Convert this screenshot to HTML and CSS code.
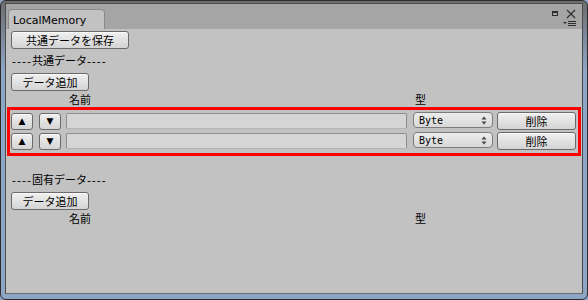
FILE: index.html
```html
<!DOCTYPE html>
<html lang="ja">
<head>
    <meta charset="UTF-8">
    <title>LocalMemory</title>
    <link rel="stylesheet" href="styles.css">
</head>
<body>
    <div class="window">
        <div class="panel">
            <div class="tabbar">
                <div class="tab">LocalMemory</div>
                <svg class="tools" width="28" height="20" viewBox="0 0 28 20">
                    <rect x="2.5" y="4.5" width="5" height="4" fill="none" stroke="#2e2e2e"/>
                    <rect x="2" y="4" width="6" height="2" fill="#2e2e2e"/>
                    <path d="M17 3 L25 11 M25 3 L17 11" stroke="#2e2e2e" stroke-width="1.2"/>
                    <path d="M13 15 L17 15 L15 17 Z" fill="#2e2e2e"/>
                    <path d="M18 14.5 H26 M18 16.5 H26 M18 18.5 H26" stroke="#2e2e2e"/>
                </svg>
            </div>
            <div class="content">
                <button class="btn btn-save">共通データを保存</button>

                <div class="section-title"><span class="dash">----</span>共通データ<span class="dash">----</span></div>
                <button class="btn btn-add">データ追加</button>
                <div class="header-row">
                    <span class="col-name">名前</span>
                    <span class="col-type">型</span>
                </div>
                <div class="highlight">
                    <div class="item-row">
                        <button class="btn btn-arrow">▲</button>
                        <button class="btn btn-arrow down">▼</button>
                        <div class="field"></div>
                        <div class="select">
                            <span>Byte</span>
                            <svg width="6" height="9" viewBox="0 0 6 9"><path d="M0.5 3.5 L3 0.5 L5.5 3.5 Z M0.5 5.5 L3 8.5 L5.5 5.5 Z" fill="#444"/></svg>
                        </div>
                        <button class="btn btn-delete">削除</button>
                    </div>
                    <div class="item-row">
                        <button class="btn btn-arrow">▲</button>
                        <button class="btn btn-arrow down">▼</button>
                        <div class="field"></div>
                        <div class="select">
                            <span>Byte</span>
                            <svg width="6" height="9" viewBox="0 0 6 9"><path d="M0.5 3.5 L3 0.5 L5.5 3.5 Z M0.5 5.5 L3 8.5 L5.5 5.5 Z" fill="#444"/></svg>
                        </div>
                        <button class="btn btn-delete">削除</button>
                    </div>
                </div>

                <div class="section-title second"><span class="dash">----</span>固有データ<span class="dash">----</span></div>
                <button class="btn btn-add">データ追加</button>
                <div class="header-row">
                    <span class="col-name">名前</span>
                    <span class="col-type">型</span>
                </div>
            </div>
        </div>
    </div>
</body>
</html>
```

FILE: styles.css
```css
body {
    margin: 0;
    background-color: #8ea6c5;
    font-family: "DejaVu Sans", "Noto Sans CJK JP", sans-serif;
    font-size: 11px;
    color: #000000;
}

.window {
    width: 588px;
    height: 300px;
    box-sizing: border-box;
    border: 1px solid #2c2c2c;
    border-radius: 6px;
    padding: 2px 4px 5px 4px;
    background: linear-gradient(#6e6e6e 0, #7b8494 30px, #8ea6c5 70px);
    display: flex;
}

.panel {
    flex: 1;
    display: flex;
    flex-direction: column;
    border: 1px solid #4a4a4a;
    border-bottom-color: #6d6d6d;
    background-color: #c2c2c2;
}

.tabbar {
    height: 25px;
    box-sizing: border-box;
    background-color: #a5a5a5;
    padding: 5px 0 0 2px;
    display: flex;
    justify-content: space-between;
    align-items: flex-start;
}

.tab {
    width: 97px;
    height: 20px;
    box-sizing: border-box;
    background-color: #c2c2c2;
    border: 1px solid #8a8a8a;
    border-bottom: none;
    border-radius: 4px 4px 0 0;
    padding: 0 4px;
    font-size: 11px;
    line-height: 21px;
}

.tools {
    margin: -2px 4px 0 0;
}

.content {
    flex: 1;
    display: flex;
    flex-direction: column;
    align-items: flex-start;
}

.btn {
    box-sizing: border-box;
    height: 18px;
    padding: 0;
    border: 1px solid #6a6a6a;
    border-radius: 3px;
    background: linear-gradient(#f0f0f0, #d4d4d4);
    box-shadow: inset 0 1px 0 #fafafa;
    font-family: "Noto Sans CJK JP", sans-serif;
    font-size: 11px;
    line-height: 16px;
    color: #000000;
}

.btn-save {
    width: 118px;
    margin: 2px 0 0 5px;
}

.btn-add {
    width: 78px;
    margin: 1px 0 0 5px;
}

.section-title {
    height: 20px;
    line-height: 20px;
    margin-top: 3px;
    padding-left: 6px;
}

.section-title.second {
    margin-top: 15px;
}

.dash {
    letter-spacing: 1px;
}

.header-row {
    align-self: stretch;
    display: flex;
    height: 16px;
    box-sizing: border-box;
    padding: 3px 0 0 63px;
    line-height: 14px;
}

.col-name {
    width: 346px;
}

.highlight {
    align-self: stretch;
    margin: 0 1px;
    border: 3px solid #ff0000;
    padding: 2px 2px 3px 1px;
    display: flex;
    flex-direction: column;
    gap: 2px;
}

.item-row {
    display: flex;
    align-items: center;
    height: 18px;
}

.btn-arrow {
    width: 22px;
    height: 17px;
    font-family: "DejaVu Sans", sans-serif;
    font-size: 9px;
    line-height: 15px;
}

.btn-arrow.down {
    margin-left: 6px;
}

.field {
    flex: 1;
    height: 16px;
    box-sizing: border-box;
    margin-left: 5px;
    background-color: #d5d5d5;
    border: 1px solid #8f8f8f;
    border-bottom-color: #b4b4b4;
    border-radius: 2px;
}

.select {
    width: 80px;
    height: 16px;
    box-sizing: border-box;
    margin: -2px 0 0 6px;
    padding: 0 5px 0 5px;
    display: flex;
    align-items: center;
    justify-content: space-between;
    background: linear-gradient(#ececec, #d8d8d8);
    border: 1px solid #7c7c7c;
    border-radius: 4px;
    font-family: "DejaVu Sans Mono", monospace;
    font-size: 10px;
}

.btn-delete {
    width: 79px;
    margin-left: 4px;
}
```
